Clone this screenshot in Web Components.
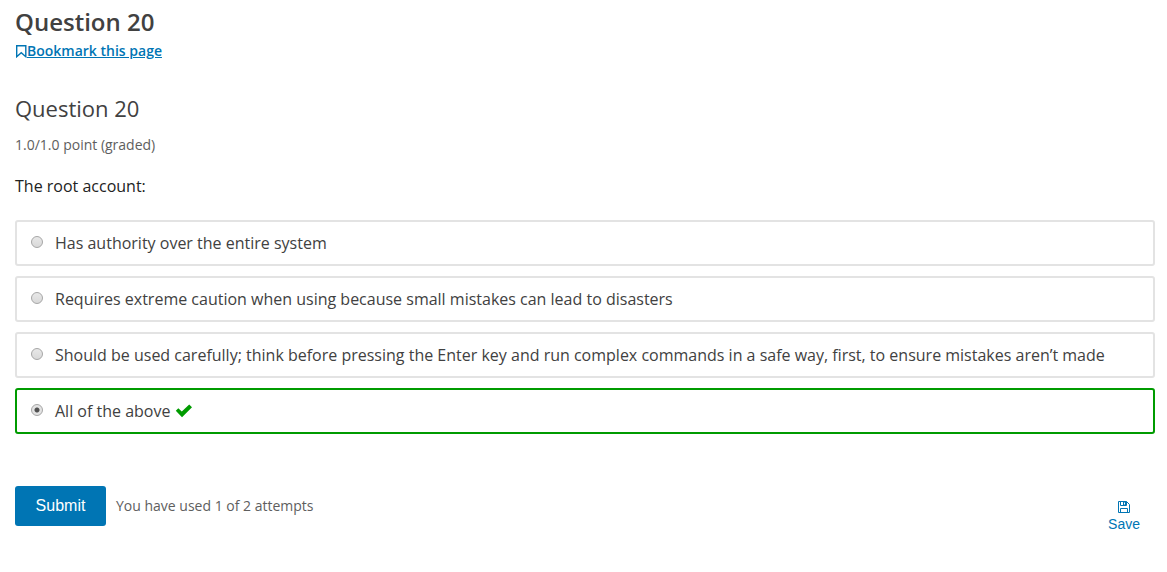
<!DOCTYPE html>
<html lang="en">
<head>
<meta charset="utf-8">
<meta name="viewport" content="width=device-width, initial-scale=1">
<title>Question 20</title>
<style>
body { margin: 0; background: #fff; color: #222; font: 16px/24px "Open Sans", sans-serif; }
</style>
</head>
<body>
<course-page>
  <unit-header heading="Question 20"></unit-header>
  <graded-problem heading="Question 20" progress="1.0/1.0 point (graded)">
    <choice-group legend="The root account:">
      <option>Has authority over the entire system</option>
      <option>Requires extreme caution when using because small mistakes can lead to disasters</option>
      <option>Should be used carefully; think before pressing the Enter key and run complex commands in a safe way, first, to ensure mistakes aren’t made</option>
      <option data-correct>All of the above</option>
    </choice-group>
    <problem-actions slot="actions">You have used 1 of 2 attempts</problem-actions>
  </graded-problem>
</course-page>

<script>
const define = (name, html, setup) => customElements.define(name, class extends HTMLElement {
  connectedCallback() {
    if (this.shadowRoot) return;
    const template = document.createElement('template');
    template.innerHTML = html;
    this.attachShadow({ mode: 'open' }).append(template.content.cloneNode(true));
    if (setup) setup(this, this.shadowRoot);
  }
});

define('course-page', `
<style>
:host { display: block; padding: 7px 12px 32px 15px; }
</style>
<main><slot></slot></main>`);

define('unit-header', `
<style>
:host { display: block; }
h1 { margin: 0; font-size: 24px; line-height: 30px; font-weight: 600; color: #414141; }
a { display: flex; width: fit-content; align-items: center; margin-top: 4px; font-size: 14px; line-height: 20px; font-weight: 600; color: #0075b4; text-decoration: underline; }
svg { width: 12px; height: 14px; }
</style>
<h1></h1>
<a href="#bookmark"><svg viewBox="0 0 12 14" fill="none" stroke="currentColor" stroke-width="1.4" aria-hidden="true"><path d="M1.7 1.7H10.8V12.7L6.25 8.7L1.7 12.7Z"/></svg>Bookmark this page</a>`,
(host, root) => { root.querySelector('h1').textContent = host.getAttribute('heading'); });

define('graded-problem', `
<style>
:host { display: block; margin-top: 32px; }
h2 { margin: 0; font-size: 22px; line-height: 30px; font-weight: 400; color: #414141; }
p { margin: 12px 0 19px; font-size: 14px; line-height: 20px; color: #5e5e5e; }
</style>
<h2></h2>
<p></p>
<slot></slot>
<slot name="actions"></slot>`,
(host, root) => {
  root.querySelector('h2').textContent = host.getAttribute('heading');
  root.querySelector('p').textContent = host.getAttribute('progress');
});

define('choice-group', `
<style>
:host { display: block; }
fieldset { min-width: 0; margin: 0; padding: 0; border: 0; }
legend { padding: 0; margin-bottom: 22px; color: #222; }
.choices { display: grid; gap: 10px; }
label { display: flex; align-items: center; padding: 9px 14px; border: 2px solid #e3e3e3; border-radius: 3px; color: #414141; }
label.correct { border-color: #009b00; }
input { appearance: none; flex: none; box-sizing: border-box; width: 12px; height: 12px; margin: 0 12px 2px 0; border: 1px solid #a6a6a6; border-radius: 50%; background: linear-gradient(#e8e8e8, #d9d9d9); }
input:checked { background: radial-gradient(circle, #505050 2px, #e3e3e3 3px); }
svg { flex: none; width: 18px; height: 14px; margin-left: 5px; fill: #009b00; }
</style>
<fieldset>
  <legend></legend>
  <div class="choices"></div>
</fieldset>
<template id="choice"><label><input type="radio" name="answer"><span></span></label></template>
<template id="mark"><svg viewBox="0 0 18 14" role="img" aria-label="Correct"><path d="M0.8 6.8L3.3 4.3L6.8 7.6L14.2 0.5L17 3.3L7 13.2Z"/></svg></template>`,
(host, root) => {
  root.querySelector('legend').textContent = host.getAttribute('legend');
  const list = root.querySelector('.choices');
  for (const option of host.querySelectorAll('option')) {
    const label = root.querySelector('#choice').content.cloneNode(true).firstElementChild;
    label.querySelector('span').textContent = option.textContent;
    if (option.hasAttribute('data-correct')) {
      label.classList.add('correct');
      label.querySelector('input').checked = true;
      label.append(root.querySelector('#mark').content.cloneNode(true));
    }
    list.append(label);
  }
});

define('problem-actions', `
<style>
:host { display: flex; align-items: flex-start; gap: 10px; margin-top: 52px; }
button { font-family: "Liberation Sans", Arial, sans-serif; cursor: pointer; }
.submit { height: 40px; min-width: 91px; padding: 0 20px; border: 0; border-radius: 3px; background: #0075b4; color: #fff; font-size: 16px; }
.status { flex: 1; font-size: 14px; line-height: 40px; color: #5e5e5e; }
.save { display: flex; flex-direction: column; align-items: center; margin: 14px 10px 0 0; padding: 0 5px; border: 0; background: none; color: #0075b4; font-size: 14px; line-height: 20px; }
svg { width: 14px; height: 14px; }
</style>
<button class="submit" type="button">Submit</button>
<span class="status"><slot></slot></span>
<button class="save" type="button"><svg viewBox="0 0 14 14" fill="none" stroke="currentColor" aria-hidden="true"><path d="M1.5 1.5H9.5L12.5 4.5V12.5H1.5Z"/><path d="M3.5 12.5V8.5H10.5V12.5M3.5 1.5V5.5H9.5V1.5"/><path d="M6.5 2H8.5V5H6.5Z"/></svg>Save</button>`);
</script>
</body>
</html>
